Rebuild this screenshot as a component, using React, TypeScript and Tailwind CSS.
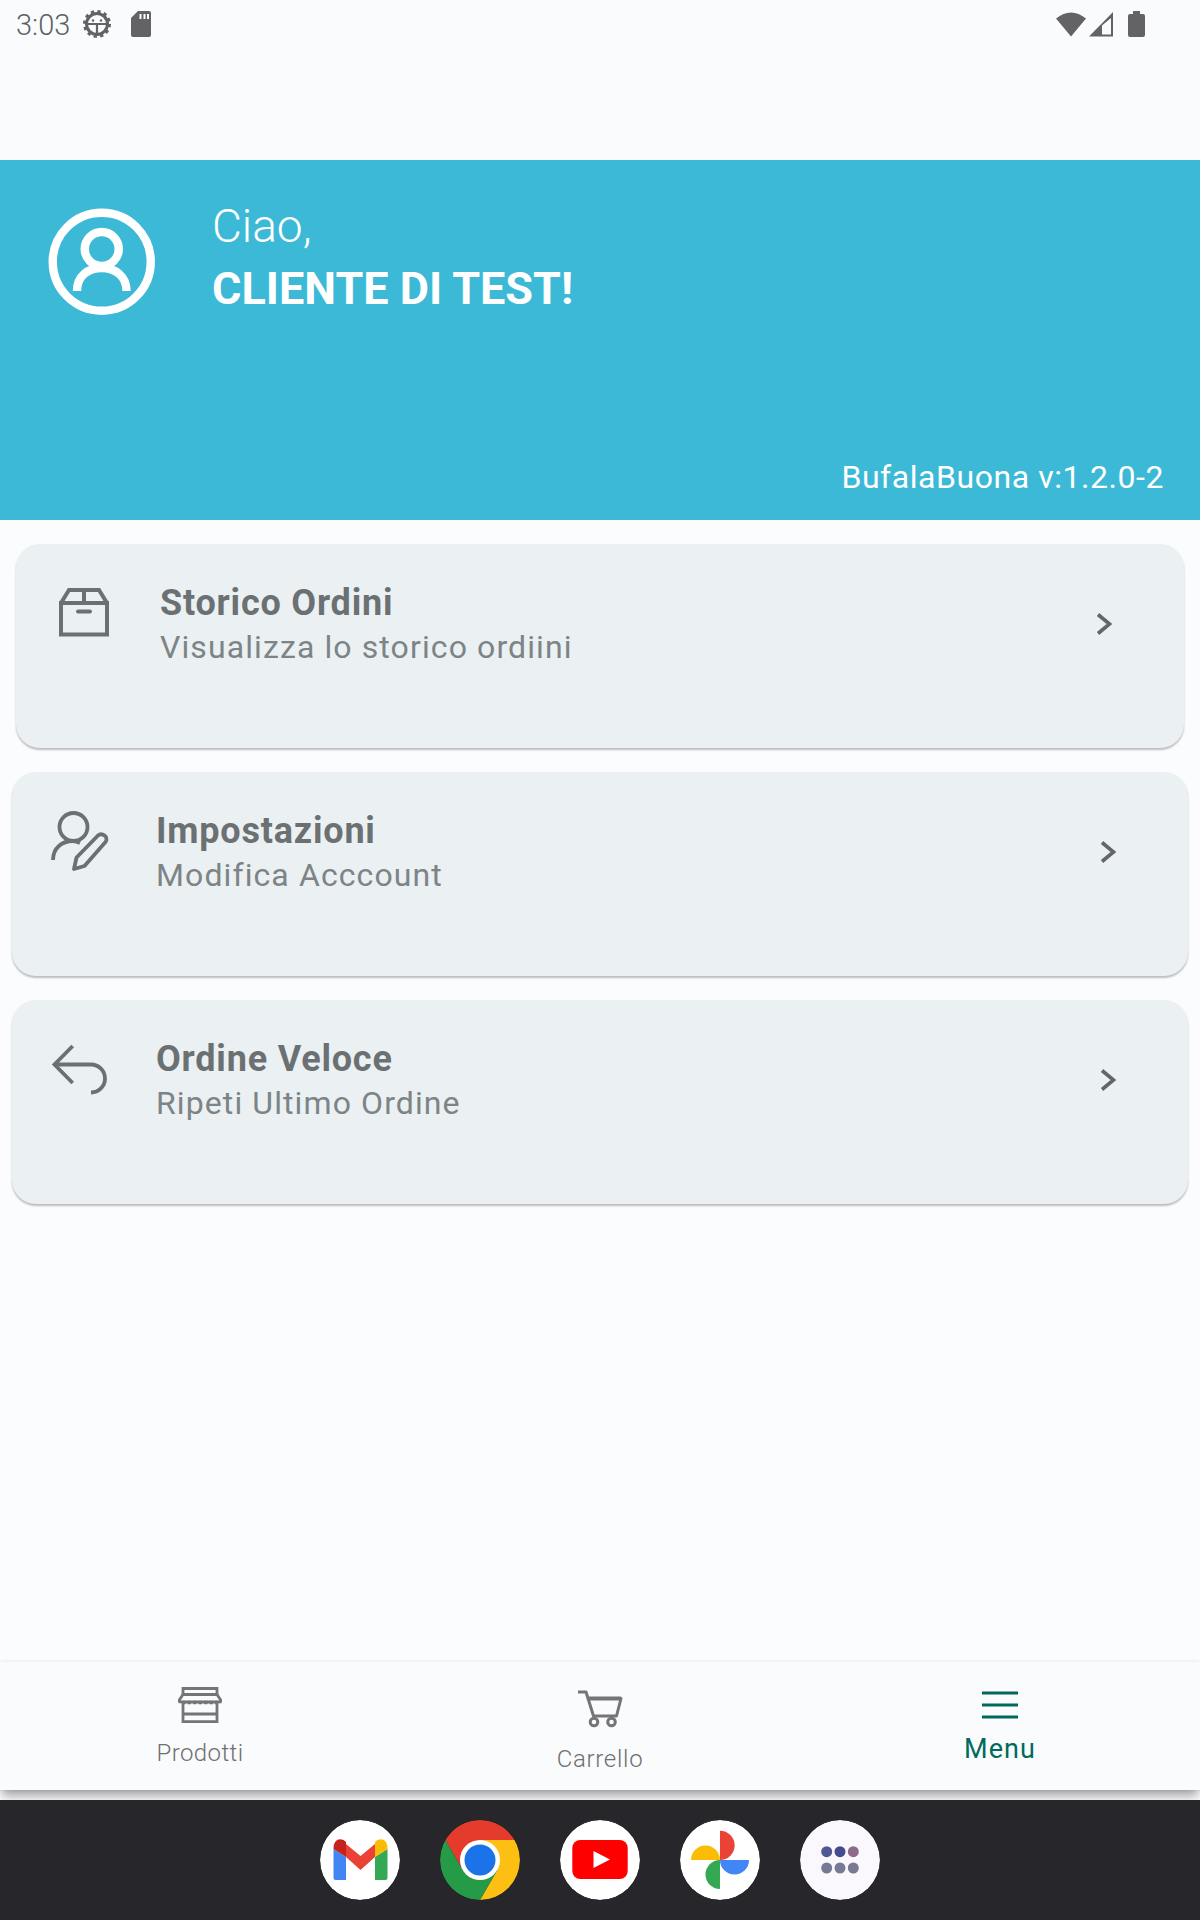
import React from "react";

const roboto = "font-['Roboto',sans-serif]";

function BoxIcon() {
  return (
    <svg width="72" height="72" viewBox="0 0 72 72" fill="none" stroke="#6b7072" strokeWidth="4">
      <path d="M13 27 H59 V58.500 H13 Z" />
      <path d="M13 27 L21 14 H51 L59 27" />
      <path d="M36 14 V27" />
      <path d="M30 35.500 H42" strokeLinecap="round" />
    </svg>
  );
}

function PersonEditIcon() {
  return (
    <svg width="72" height="72" viewBox="0 0 72 72" fill="none" stroke="#6b7072" strokeWidth="3.800">
      <circle cx="29.500" cy="23" r="14" />
      <path d="M9 56 C9 44 18 37 29 37 C32 37 34 38 36 39" />
      <path d="M30 65 L32.500 53.500 L54 31.500 C58 28 65 33 61.500 38 L40.500 62 Z" strokeLinejoin="round" />
    </svg>
  );
}

function ReplyIcon() {
  return (
    <svg width="72" height="72" viewBox="0 0 72 72" fill="none" stroke="#6b7072" strokeWidth="3.800">
      <path d="M28.700 14 L10.500 32.500 L28.700 51" />
      <path d="M10.500 32.500 H47 A14 14 0 0 1 47 60.500" />
    </svg>
  );
}

function Chevron() {
  return (
    <svg width="24" height="24" viewBox="0 0 24 24" fill="none" stroke="#636668" strokeWidth="3.600">
      <path d="M6 2.500 L17.500 12 L6 21.500" />
    </svg>
  );
}

function Card({
  icon,
  title,
  sub,
  className,
}: {
  icon: React.ReactNode;
  title: string;
  sub: string;
  className: string;
}) {
  return (
    <div className={`flex h-[204px] rounded-[24px] bg-[#ebf0f2] shadow-[0_2px_2px_rgba(0,0,0,0.25)] ${className}`}>
      <div className="ml-[32px] mt-[32px] h-[72px] w-[72px] shrink-0">{icon}</div>
      <div className="ml-[40px] flex flex-col pt-[37px]">
        <div className="h-[44px] text-[36px] font-bold leading-[45px] tracking-[0.8px] text-[#6b7072]">{title}</div>
        <div className="h-[44px] text-[32px] leading-[44px] tracking-[1.1px] text-[#7d8486]">{sub}</div>
      </div>
      <div className="ml-auto mr-[68px] mt-[68px] h-[24px] w-[24px]">
        <Chevron />
      </div>
    </div>
  );
}

function StatusBar() {
  return (
    <div className="flex h-[160px] items-start justify-between bg-[#fafbfd] pl-[16px] pr-[55px] pt-[10px]">
      <div className="flex items-start">
        <div className="h-[28px] w-[67px] text-[29px] font-light leading-[31px] text-[#5f6064]">3:03</div>
        <svg width="28" height="28" viewBox="0 0 28 28" fill="none" stroke="#636366">
          <circle cx="14" cy="14" r="10.500" strokeWidth="3" />
          <circle cx="14" cy="14" r="12.300" strokeWidth="3.400" strokeDasharray="3.200 3.240" />
          <path d="M4 14 H24 M14 14 V24" strokeWidth="2.200" />
          <circle cx="10" cy="10.500" r="1.200" fill="#636366" stroke="none" />
          <circle cx="18" cy="10.500" r="1.200" fill="#636366" stroke="none" />
        </svg>
        <svg className="ml-[20px] mt-[1px]" width="20" height="26" viewBox="0 0 20 26">
          <path d="M7 0 H18 Q20 0 20 2 V24 Q20 26 18 26 H2 Q0 26 0 24 V7 Z" fill="#636366" />
          <path d="M8.500 3 H10.500 V8 H8.500 Z M12.500 3 H14.500 V8 H12.500 Z M16 3 H18 V8 H16 Z" fill="#fff" />
        </svg>
      </div>
      <div className="flex items-start pt-[1px]">
        <svg width="30" height="26" viewBox="0 0 30 26">
          <path d="M0 7.500 Q15 -4.500 30 7.500 L15 25.500 Z" fill="#636366" />
        </svg>
        <svg className="ml-[3px]" width="24" height="26" viewBox="0 0 24 26">
          <path d="M0 25.500 L24 1 V25.500 Z M13 23.500 H22 V7 L13 14.500 Z" fill="#636366" fillRule="evenodd" />
        </svg>
        <svg className="ml-[15px]" width="17" height="26" viewBox="0 0 17 26">
          <path d="M5 0 H12 V3 H15 Q17 3 17 5 V24 Q17 26 15 26 H2 Q0 26 0 24 V5 Q0 3 2 3 H5 Z" fill="#636366" />
        </svg>
      </div>
    </div>
  );
}

function Header() {
  return (
    <div className="flex h-[360px] flex-col bg-[#3bb9d6] text-white">
      <div className="flex pl-[48px] pt-[48px]">
        <svg width="108" height="108" viewBox="0 0 108 108" fill="none" stroke="#fff" strokeWidth="8.400">
          <circle cx="53.750" cy="53.750" r="49" />
          <circle cx="53.750" cy="41" r="17" />
          <path d="M29 83 C29 68 40 60 53.750 60 C67 60 78.500 68 78.500 83" />
        </svg>
        <div className="ml-[56px] flex flex-col">
          <div className="-mt-[12px] text-[46px] font-light leading-[61px]">Ciao,</div>
          <div className="text-[45px] font-bold leading-[64px]">CLIENTE DI TEST!</div>
        </div>
      </div>
      <div className="mt-auto pb-[25px] pr-[36px] text-right text-[32px] leading-[36px] tracking-[0.55px]">
        BufalaBuona v:1.2.0-2
      </div>
    </div>
  );
}

function Nav() {
  return (
    <div className="relative z-0 grid h-[128px] grid-cols-3 bg-[#fafbfd] shadow-[0_0_4px_rgba(0,0,0,0.1),0_8px_10px_-2px_rgba(0,0,0,0.35)]">
      <div className="flex flex-col items-center pt-[25px]">
        <svg width="44" height="36" viewBox="0 0 44 36" fill="none" stroke="#757575" strokeWidth="2.800">
          <path d="M5 8 V1.500 H39 V8" />
          <path d="M5 7.500 H39 L43 13.500 Q43 15 41 15 H3 Q1 15 1 13.500 Z" />
          <path d="M4 15.500 H40" strokeWidth="3.400" strokeDasharray="3.500 2" />
          <path d="M5 17 V34.700 H39 V17 M5 27 H39" />
        </svg>
        <div className="mt-[16px] text-[24px] font-light leading-[28px] tracking-[0.4px] text-[#6f6f6f]">Prodotti</div>
      </div>
      <div className="flex flex-col items-center pt-[28px]">
        <svg width="46" height="38" viewBox="0 0 46 38" fill="none" stroke="#757575" strokeWidth="3">
          <path d="M1 2 H9 L16.500 26 H39.500 L44 8.500 H11" strokeLinejoin="round" />
          <path d="M11 8.500 H44" strokeWidth="4" />
          <circle cx="17" cy="32" r="3.800" />
          <circle cx="34.500" cy="32" r="3.800" />
        </svg>
        <div className="mt-[17px] text-[24px] font-light leading-[28px] tracking-[0.7px] text-[#6f6f6f]">Carrello</div>
      </div>
      <div className="flex flex-col items-center pt-[29px]">
        <svg width="36" height="28" viewBox="0 0 36 28" fill="none" stroke="#006a5e" strokeWidth="3">
          <path d="M0 2 H36 M0 14 H36 M0 26 H36" />
        </svg>
        <div className="mt-[14px] text-[27px] leading-[32px] tracking-[1.1px] text-[#006a5e]">Menu</div>
      </div>
    </div>
  );
}

function Dock() {
  const circle = "h-[80px] w-[80px] rounded-full";
  return (
    <div className="relative z-10 mt-[10px] flex h-[120px] items-center justify-center gap-[40px] bg-[#26262b]">
      <svg className={circle} viewBox="0 0 80 80">
        <circle cx="40" cy="40" r="40" fill="#fff" />
        <path d="M13.500 29 L13.500 58 Q13.500 60 15.500 60 H26 V37 Z" fill="#4285f4" />
        <path d="M67.500 29 V58 Q67.500 60 65.500 60 H55 V37 Z" fill="#34a853" />
        <path d="M26 24 L40.500 36 L55 24 V37 L40.500 50 L26 37 Z" fill="#ea4335" />
        <path d="M13.500 29 Q13.500 19.300 20.500 19.300 Q24 19.500 26 22 V37 Z" fill="#c5221f" />
        <path d="M67.500 29 Q67.500 19.300 60.500 19.300 Q57 19.500 55 22 V37 Z" fill="#fbbc04" />
      </svg>
      <svg className={circle} viewBox="0 0 80 80">
        <path d="M5.360 20 A40 40 0 0 1 74.640 20 H40 L22.680 50 Z" fill="#e53b2c" />
        <path d="M74.640 20 A40 40 0 0 1 40 80 L57.320 50 L40 20 Z" fill="#fdbf12" />
        <path d="M40 80 A40 40 0 0 1 5.360 20 L22.680 50 H57.320 Z" fill="#259a47" />
        <circle cx="40" cy="40" r="20" fill="#fff" />
        <circle cx="40" cy="40" r="15.500" fill="#1a73e8" />
      </svg>
      <svg className={circle} viewBox="0 0 80 80">
        <circle cx="40" cy="40" r="40" fill="#fff" />
        <rect x="12.300" y="20" width="55.400" height="39" rx="8" fill="#ff0000" />
        <path d="M33.500 31 L50 39.500 L33.500 48 Z" fill="#fff" />
      </svg>
      <svg className={circle} viewBox="0 0 80 80">
        <circle cx="40" cy="40" r="40" fill="#fff" />
        <path d="M40 10.700 A14.650 14.650 0 0 1 40 40 Z" fill="#ea4335" />
        <path d="M11 40 A14.500 14.500 0 0 1 40 40 Z" fill="#fbbc04" />
        <path d="M40 69 A14.500 14.500 0 0 1 40 40 Z" fill="#34a853" />
        <path d="M69 40 A14.500 14.500 0 0 1 40 40 Z" fill="#4285f4" />
      </svg>
      <svg className={circle} viewBox="0 0 80 80">
        <circle cx="40" cy="40" r="40" fill="#fbf8fd" />
        <circle cx="26.700" cy="31.700" r="5.500" fill="#4f5a95" />
        <circle cx="40" cy="31.700" r="5.500" fill="#434c8c" />
        <circle cx="53.300" cy="31.700" r="5.500" fill="#8d6a8a" />
        <circle cx="26.700" cy="48" r="5.500" fill="#777a92" />
        <circle cx="40" cy="48" r="5.500" fill="#777a92" />
        <circle cx="53.300" cy="48" r="5.500" fill="#777a92" />
      </svg>
    </div>
  );
}

export default function App() {
  return (
    <div className={`flex h-[1920px] w-[1200px] flex-col overflow-hidden bg-[#fbfcfe] ${roboto}`}>
      <StatusBar />
      <Header />
      <div className="flex flex-1 flex-col">
        <Card className="mx-[16px] mt-[24px]" icon={<BoxIcon />} title="Storico Ordini" sub="Visualizza lo storico ordiini" />
        <Card className="mx-[12px] mt-[24px]" icon={<PersonEditIcon />} title="Impostazioni" sub="Modifica Acccount" />
        <Card className="mx-[12px] mt-[24px]" icon={<ReplyIcon />} title="Ordine Veloce" sub="Ripeti Ultimo Ordine" />
      </div>
      <Nav />
      <Dock />
    </div>
  );
}
